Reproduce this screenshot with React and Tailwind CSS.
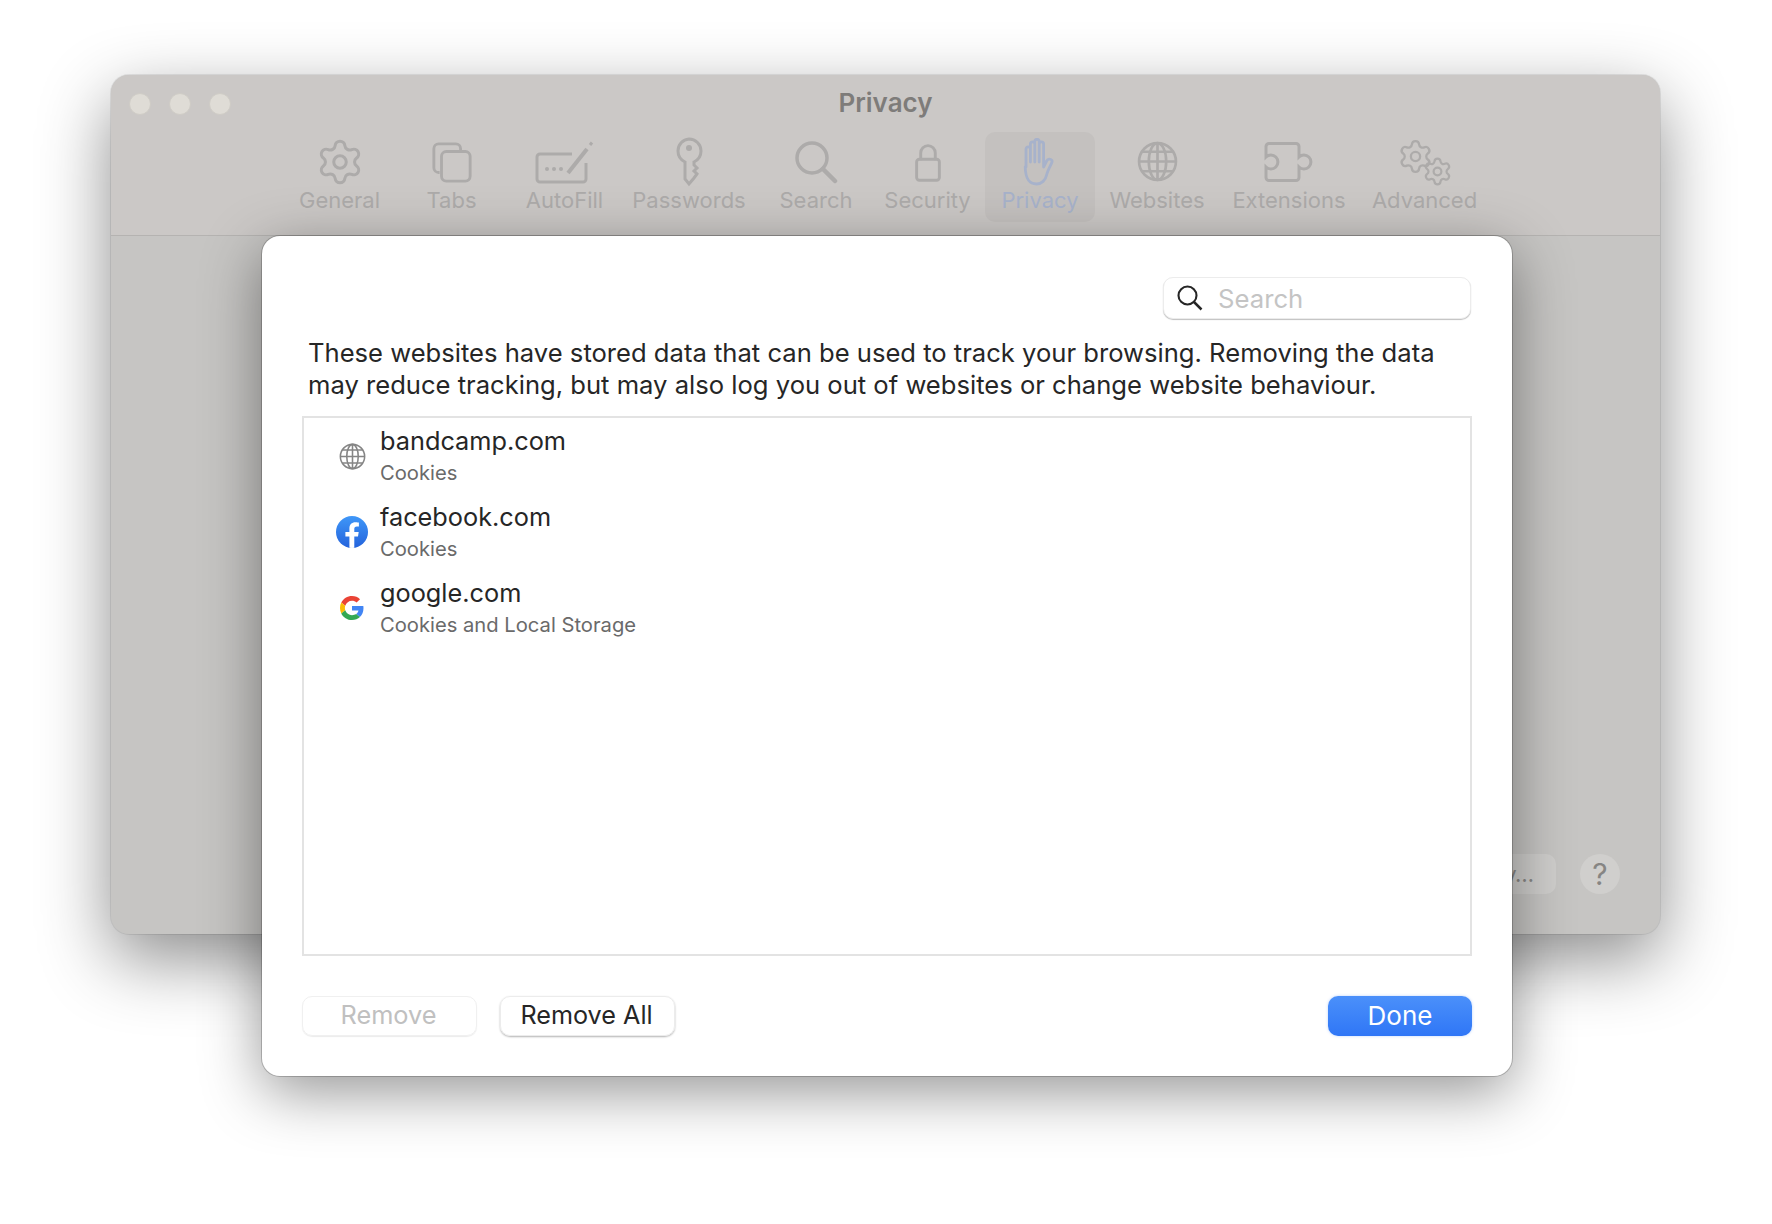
import { Settings } from "lucide-react";

function GeneralIcon() {
    return <Settings size={50} strokeWidth={1.45} />;
}

function TabsIcon() {
    return (
        <svg width="42" height="42" viewBox="0 0 44 44" fill="none" stroke="currentColor" strokeWidth="3">
            <path d="M9 33 h-1 a5 5 0 0 1 -5 -5 v-20 a5 5 0 0 1 5 -5 h18 a5 5 0 0 1 5 5 v2" />
            <rect x="11" y="11" width="30" height="31" rx="5" />
        </svg>
    );
}

function AutoFillIcon() {
    return (
        <svg width="60" height="44" viewBox="0 0 60 44" fill="none" stroke="currentColor" strokeWidth="3">
            <path d="M37 14 H5 a3 3 0 0 0 -3 3 v22 a3 3 0 0 0 3 3 h43 a3 3 0 0 0 3 -3 V23" />
            <circle cx="12" cy="29" r="2" fill="currentColor" stroke="none" />
            <circle cx="19" cy="29" r="2" fill="currentColor" stroke="none" />
            <circle cx="26" cy="29" r="2" fill="currentColor" stroke="none" />
            <path d="M33 33 L52 9" strokeWidth="4" />
            <path d="M55 5 L57 2.5" strokeWidth="3" />
        </svg>
    );
}

function KeyIcon() {
    return (
        <svg width="30" height="50" viewBox="0 0 30 50" fill="none" stroke="currentColor" strokeWidth="3">
            <path d="M15 2 a12 12 0 0 1 12 12 c0 5 -3 9 -7 11 v3 l3 3 l-3 3 l3 3 l-3 4 l-5 6 l-4 -5 V25 c-4 -2 -7 -6 -7 -11 a12 12 0 0 1 11 -12 z" />
            <circle cx="15" cy="11" r="3" fill="currentColor" stroke="none" />
        </svg>
    );
}

function SearchIcon() {
    return (
        <svg width="44" height="44" viewBox="0 0 44 44" fill="none" stroke="currentColor" strokeWidth="3.5">
            <circle cx="18" cy="18" r="15" />
            <path d="M29 29 L41 41" strokeWidth="4.5" strokeLinecap="round" />
        </svg>
    );
}

function LockIcon() {
    return (
        <svg width="28" height="40" viewBox="0 0 30 44" fill="none" stroke="currentColor" strokeWidth="3.2">
            <path d="M7 20 v-8 a8 8 0 0 1 16 0 v8" />
            <rect x="2.5" y="19" width="25" height="23" rx="3" />
        </svg>
    );
}

function HandIcon() {
    return (
        <svg width="34" height="48" viewBox="0 0 34 48" fill="none" stroke="currentColor" strokeWidth="2.8" strokeLinejoin="round">
            <path d="M3 29 V11 a2.2 2.2 0 0 1 4.4 0 V24 V6 a2.2 2.2 0 0 1 4.4 0 V24 V3.5 a2.2 2.2 0 0 1 4.4 0 V24 V6 a2.2 2.2 0 0 1 4.4 0 V29 l3 -6 c1.5 -3 6 -2 5.4 1 c-1 3 -4.4 8 -5.4 13 c-1 5 -5 9 -10 9 c-7 0 -11 -4 -11.4 -17 z" />
        </svg>
    );
}

function GlobeIcon({ size = 41, width = 2.6 }) {
    return (
        <svg width={size} height={size} viewBox="0 0 40 40" fill="none" stroke="currentColor" strokeWidth={width}>
            <circle cx="20" cy="20" r="18" />
            <ellipse cx="20" cy="20" rx="8.5" ry="18" />
            <path d="M20 2 V38 M2 20 H38 M5 10.5 H35 M5 29.5 H35" />
        </svg>
    );
}

function ExtensionIcon() {
    return (
        <svg width="50" height="40" viewBox="0 0 50 40" fill="none" stroke="currentColor" strokeWidth="3">
            <path d="M2 4.5 a3 3 0 0 1 3 -3 h27 a3 3 0 0 1 3 3 v10.5 a7 7 0 1 1 0 10 v10.5 a3 3 0 0 1 -3 3 H5 a3 3 0 0 1 -3 -3 v-10.5 a7 7 0 1 0 0 -10 z" />
        </svg>
    );
}

function AdvancedIcon() {
    return (
        <div className="relative w-[56px] h-[44px]">
            <Settings size={37} strokeWidth={1.5} className="absolute left-0 top-[-2px]" />
            <Settings size={31} strokeWidth={1.7} className="absolute right-0 bottom-[-3px]" />
        </div>
    );
}

function FacebookIcon() {
    return (
        <svg width="32" height="32" viewBox="0 0 32 32">
            <defs>
                <linearGradient id="fbBlue" x1="0" y1="0" x2="0" y2="1">
                    <stop offset="0" stopColor="#3f97f8" />
                    <stop offset="1" stopColor="#2463dc" />
                </linearGradient>
                <clipPath id="fbClip">
                    <circle cx="16" cy="16" r="16" />
                </clipPath>
            </defs>
            <circle cx="16" cy="16" r="16" fill="url(#fbBlue)" />
            <path clipPath="url(#fbClip)" fill="#fff" d="M13.4 32 V20.6 H9.4 V16 h4 v-3.5 c0 -4 2.4 -6.2 6 -6.2 c1.7 0 3.5 .3 3.5 .3 v3.9 h-2 c-2 0 -2.6 1.2 -2.6 2.5 V16 h4.4 l-.7 4.6 h-3.7 V32 z" />
        </svg>
    );
}

function GoogleIcon() {
    return (
        <svg width="24" height="24" viewBox="0 0 48 48">
            <path fill="#EA4335" d="M24 9.5c3.54 0 6.71 1.22 9.21 3.6l6.85-6.85C35.9 2.38 30.47 0 24 0 14.62 0 6.51 5.38 2.56 13.22l7.98 6.19C12.43 13.72 17.74 9.5 24 9.5z" />
            <path fill="#4285F4" d="M46.98 24.55c0-1.57-.15-3.09-.38-4.55H24v9.02h12.94c-.58 2.96-2.26 5.48-4.78 7.18l7.73 6c4.51-4.18 7.09-10.36 7.09-17.65z" />
            <path fill="#FBBC05" d="M10.53 28.59c-.48-1.45-.76-2.99-.76-4.59s.27-3.14.76-4.59l-7.98-6.19C.92 16.46 0 20.12 0 24c0 3.88.92 7.54 2.56 10.78l7.97-6.19z" />
            <path fill="#34A853" d="M24 48c6.48 0 11.93-2.13 15.89-5.81l-7.73-6c-2.15 1.45-4.92 2.3-8.16 2.3-6.26 0-11.57-4.22-13.47-9.91l-7.98 6.19C6.51 42.62 14.62 48 24 48z" />
        </svg>
    );
}

// widths are per item because the toolbar labels are not evenly spaced
const tabs = [
    { label: "General", icon: <GeneralIcon />, width: "w-[101px]" },
    { label: "Tabs", icon: <TabsIcon />, width: "w-[123px]" },
    { label: "AutoFill", icon: <AutoFillIcon />, width: "w-[103px]" },
    { label: "Passwords", icon: <KeyIcon />, width: "w-[146px]" },
    { label: "Search", icon: <SearchIcon />, width: "w-[108px]" },
    { label: "Security", icon: <LockIcon />, width: "w-[115px]" },
    { label: "Privacy", icon: <HandIcon />, width: "w-[110px]", active: true },
    { label: "Websites", icon: <GlobeIcon />, width: "w-[124px]" },
    { label: "Extensions", icon: <ExtensionIcon />, width: "w-[140px]" },
    { label: "Advanced", icon: <AdvancedIcon />, width: "w-[131px]" },
];

const sites = [
    { name: "bandcamp.com", detail: "Cookies", icon: <span className="text-[#858585]"><GlobeIcon size={27} width={2.3} /></span> },
    { name: "facebook.com", detail: "Cookies", icon: <FacebookIcon /> },
    { name: "google.com", detail: "Cookies and Local Storage", icon: <GoogleIcon /> },
];

export default function App() {
    return (
        <div className="relative w-[1772px] h-[1224px] overflow-hidden bg-white pt-[75px] pl-[111px] font-['Inter',sans-serif]">
            <div className="relative flex flex-col w-[1549px] h-[859px] rounded-[18px] bg-[#c6c5c3] shadow-[0_0_0_1px_rgba(0,0,0,0.08),0_25px_70px_rgba(0,0,0,0.45)]">
                <div className="relative h-[161px] rounded-t-[18px] bg-[#cbc8c6] border-b border-[#b5b3b1]">
                    <div className="flex gap-[18px] pl-[18px] pt-[18px]">
                        <span className="w-[22px] h-[22px] rounded-full bg-[#dfdcd6] border border-[#cfccc6]" />
                        <span className="w-[22px] h-[22px] rounded-full bg-[#dfdcd6] border border-[#cfccc6]" />
                        <span className="w-[22px] h-[22px] rounded-full bg-[#dfdcd6] border border-[#cfccc6]" />
                    </div>
                    <div className="absolute left-0 right-0 top-[12px] text-center text-[26px] leading-[32px] font-semibold text-[#7e7c7a]">Privacy</div>
                    <div className="absolute left-0 right-0 top-[57px] flex justify-center pl-[8px]">
                        {tabs.map((t) => (
                            <div
                                key={t.label}
                                className={`flex flex-col items-center h-[90px] rounded-[10px] ${t.width} ${t.active ? "bg-[#c4c1bf] text-[#a7b2cb]" : "text-[#adabaa]"}`}
                            >
                                <div className="flex items-center justify-center h-[54px] pt-[5px]">{t.icon}</div>
                                <div className="text-[22px] leading-[28px] whitespace-nowrap">{t.label}</div>
                            </div>
                        ))}
                    </div>
                </div>
                <div className="mt-auto flex justify-end items-center gap-[24px] pr-[40px] pb-[40px]">
                    <div className="h-[40px] pl-[16px] pr-[22px] rounded-[10px] bg-[#cfcecc] text-[22px] leading-[40px] text-[#8a8987]">Privacy Policy…</div>
                    <div className="w-[40px] h-[40px] rounded-full bg-[#d0cfcd] text-center text-[30px] leading-[40px] text-[#868583]">?</div>
                </div>

                <div className="absolute left-[151px] top-[161px] w-[1250px] h-[840px] rounded-[18px] bg-white pt-[41px] pl-[40px] pr-[40px] shadow-[0_0_0_1px_rgba(0,0,0,0.2),0_16px_60px_rgba(0,0,0,0.42)]">
                    <div className="flex justify-end pr-[1px]">
                        <div className="flex items-center w-[308px] h-[42px] rounded-[10px] bg-white border border-[#ececec] shadow-[0_1px_1px_rgba(0,0,0,0.25)] pl-[13px] text-[#262626]">
                            <svg width="26" height="26" viewBox="0 0 26 26" fill="none" stroke="currentColor" strokeWidth="2.1" className="shrink-0">
                                <circle cx="10.5" cy="10.5" r="9" />
                                <path d="M17 17 L24.5 24.5" strokeWidth="2.5" />
                            </svg>
                            <span className="ml-[15px] pt-[2px] text-[25.7px] leading-[32px] text-[#c4c4c4]">Search</span>
                        </div>
                    </div>
                    <p className="mt-[18px] ml-[6px] w-[1160px] text-[25.6px] leading-[32px] text-[#262626]">
                        These websites have stored data that can be used to track your browsing. Removing the data
                        may reduce tracking, but may also log you out of websites or change website behaviour.
                    </p>
                    <div className="mt-[15px] h-[540px] border-2 border-[#e3e3e3] bg-white">
                        {sites.map((s) => (
                            <div key={s.name} className="flex items-center h-[76px]">
                                <div className="flex items-center justify-center w-[32px] ml-[32px] shrink-0">{s.icon}</div>
                                <div className="ml-[12px] pb-[2px]">
                                    <div className="text-[25.3px] leading-[34px] text-[#262626]">{s.name}</div>
                                    <div className="text-[20.2px] leading-[28px] mt-[1px] text-[#6a6a6a]">{s.detail}</div>
                                </div>
                            </div>
                        ))}
                    </div>
                    <div className="mt-[40px] flex items-center">
                        <div className="flex items-center justify-center w-[175px] h-[40px] pb-[2px] pr-[2px] rounded-[10px] border border-[#f0f0f0] shadow-[0_1px_1px_rgba(0,0,0,0.08)] text-[25.3px] text-[#c0c0c0]">Remove</div>
                        <div className="ml-[23px] flex items-center justify-center w-[175px] h-[40px] pb-[1px] pr-[2px] rounded-[10px] border border-[#ececec] shadow-[0_1px_2px_rgba(0,0,0,0.3)] text-[25.2px] text-[#262626]">Remove All</div>
                        <div className="ml-auto flex items-center justify-center w-[144px] h-[40px] pb-[2px] rounded-[10px] bg-gradient-to-b from-[#4b90fa] to-[#2f76f6] text-[26px] text-white shadow-[0_0_3px_rgba(60,130,250,0.35)]">Done</div>
                    </div>
                </div>
            </div>
        </div>
    );
}
